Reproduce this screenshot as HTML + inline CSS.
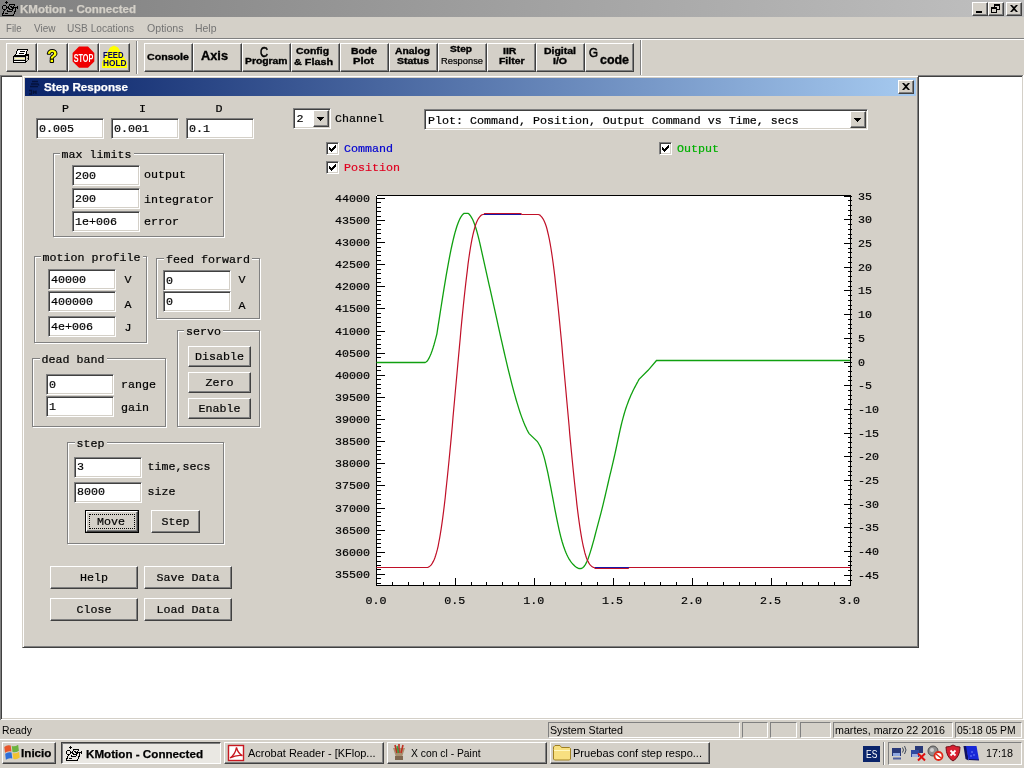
<!DOCTYPE html>
<html><head><meta charset="utf-8"><title>KMotion - Connected</title>
<style>
*{box-sizing:border-box;margin:0;padding:0}
html,body{width:1024px;height:768px;overflow:hidden;background:#d4d0c8}
body{position:relative;font-family:"Liberation Sans",sans-serif;font-size:11px;color:#000}
#root{position:absolute;left:0;top:0;width:1024px;height:768px;overflow:hidden;will-change:transform}
.a{position:absolute}
.t{position:absolute;white-space:pre;line-height:1}
.m{font-family:"Liberation Mono",monospace;font-size:11.667px;-webkit-text-stroke:0.2px currentColor}
.btn{position:absolute;background:#d4d0c8;border:1px solid;border-color:#fff #404040 #404040 #fff;box-shadow:inset -1px -1px 0 #808080, inset 1px 1px 0 #d4d0c8}
.tb{position:absolute;background:#d4d0c8;border:1px solid;border-color:#fff #404040 #404040 #fff;box-shadow:inset -1px -1px 0 #808080;}
.ed{position:absolute;background:#fff;border:1px solid;border-color:#808080 #fff #fff #808080;box-shadow:inset 1px 1px 0 #404040, inset -1px -1px 0 #d4d0c8}
.gb{position:absolute;border:1px solid;border-color:#808080 #fff #fff #808080;box-shadow:inset 1px 1px 0 #fff, 1px 1px 0 #fff}
.gb2{position:absolute;border:1px solid #808080;box-shadow:inset 1px 1px 0 #fff, 1px 1px 0 #fff}
.lg{position:absolute;background:#d4d0c8;white-space:pre;line-height:1;padding:0 2px}
.sunk{position:absolute;border:1px solid;border-color:#808080 #fff #fff #808080}
.cb{position:absolute;width:13px;height:13px;background:#fff;border:1px solid;border-color:#808080 #fff #fff #808080;box-shadow:inset 1px 1px 0 #404040, inset -1px -1px 0 #d4d0c8}
</style></head>
<body>
<div id="root">
<div class="a" style="left:0px;top:0px;width:1024px;height:17px;background:linear-gradient(90deg,#808080,#c0c0c0);"></div>
<div class="t" style="left:20.00px;top:3.69px;font-size:11px;font-weight:bold;color:#d4d0c8;transform:scaleX(1.0488);transform-origin:0 0;-webkit-text-stroke:0.25px currentColor;">KMotion - Connected</div>
<div class="btn" style="left:972px;top:2px;width:16px;height:14px">
<div class="a" style="left:3px;top:8px;width:6px;height:2px;background:#000"></div>
</div>
<div class="btn" style="left:988px;top:2px;width:16px;height:14px">
<div class="a" style="left:5px;top:1px;width:6px;height:6px;border:1px solid #000;border-top-width:2px"></div>
<div class="a" style="left:2px;top:4px;width:6px;height:6px;border:1px solid #000;border-top-width:2px;background:#d4d0c8"></div>
</div>
<div class="btn" style="left:1006px;top:2px;width:16px;height:14px">
<svg class="a" style="left:3px;top:2px" width="8" height="7" viewBox="0 0 8 7"><path d="M0 0h2l2 2 2-2h2l-3 3.5 3 3.5h-2l-2-2-2 2h-2l3-3.5z" fill="#000"/></svg>
</div>
<div class="t" style="left:6.00px;top:22.69px;font-size:11px;color:#747474;transform:scaleX(0.8744);transform-origin:0 0;">File</div>
<div class="t" style="left:34.00px;top:22.69px;font-size:11px;color:#747474;transform:scaleX(0.9093);transform-origin:0 0;">View</div>
<div class="t" style="left:67.00px;top:22.69px;font-size:11px;color:#747474;transform:scaleX(0.9208);transform-origin:0 0;">USB Locations</div>
<div class="t" style="left:147.00px;top:22.69px;font-size:11px;color:#747474;transform:scaleX(0.9628);transform-origin:0 0;">Options</div>
<div class="t" style="left:195.00px;top:22.69px;font-size:11px;color:#747474;transform:scaleX(0.9503);transform-origin:0 0;">Help</div>
<div class="a" style="left:0px;top:38px;width:1024px;height:1px;background:#808080;"></div>
<div class="a" style="left:0px;top:39px;width:1024px;height:1px;background:#ffffff;"></div>
<div class="tb" style="left:6px;top:43px;width:31px;height:29px"></div>
<div class="tb" style="left:37px;top:43px;width:31px;height:29px"></div>
<div class="tb" style="left:68px;top:43px;width:31px;height:29px"></div>
<div class="tb" style="left:99px;top:43px;width:31px;height:29px"></div>
<div class="a" style="left:136px;top:41px;width:1px;height:33px;background:#808080;"></div>
<div class="a" style="left:137px;top:41px;width:1px;height:33px;background:#ffffff;"></div>
<div class="tb" style="left:144px;top:43px;width:49px;height:29px"></div>
<div class="tb" style="left:193px;top:43px;width:49px;height:29px"></div>
<div class="tb" style="left:242px;top:43px;width:49px;height:29px"></div>
<div class="tb" style="left:291px;top:43px;width:49px;height:29px"></div>
<div class="tb" style="left:340px;top:43px;width:49px;height:29px"></div>
<div class="tb" style="left:389px;top:43px;width:49px;height:29px"></div>
<div class="tb" style="left:438px;top:43px;width:49px;height:29px"></div>
<div class="tb" style="left:487px;top:43px;width:49px;height:29px"></div>
<div class="tb" style="left:536px;top:43px;width:49px;height:29px"></div>
<div class="tb" style="left:585px;top:43px;width:49px;height:29px"></div>
<div class="t" style="left:147.00px;top:51.87px;font-size:9.6px;font-weight:bold;color:#000;transform:scaleX(1.1090);transform-origin:0 0;-webkit-text-stroke:0.35px #000;">Console</div>
<div class="t" style="left:201.00px;top:50.16px;font-size:12.8px;font-weight:bold;color:#000;transform:scaleX(0.9986);transform-origin:0 0;-webkit-text-stroke:0.35px #000;">Axis</div>
<div class="t" style="left:260.40px;top:45.41px;font-size:14.4px;color:#000;transform:scaleX(0.7693);transform-origin:0 0;-webkit-text-stroke:0.6px #000;">C</div>
<div class="t" style="left:244.75px;top:57.13px;font-size:9.3px;font-weight:bold;color:#000;transform:scaleX(1.1113);transform-origin:0 0;-webkit-text-stroke:0.35px #000;">Program</div>
<div class="t" style="left:296.00px;top:47.38px;font-size:9px;font-weight:bold;color:#000;transform:scaleX(1.1583);transform-origin:0 0;-webkit-text-stroke:0.35px #000;">Config</div>
<div class="t" style="left:294.00px;top:58.13px;font-size:9.3px;font-weight:bold;color:#000;transform:scaleX(1.1610);transform-origin:0 0;-webkit-text-stroke:0.35px #000;">&amp; Flash</div>
<div class="t" style="left:350.75px;top:46.78px;font-size:9px;font-weight:bold;color:#000;transform:scaleX(1.1555);transform-origin:0 0;-webkit-text-stroke:0.35px #000;">Bode</div>
<div class="t" style="left:353.00px;top:56.78px;font-size:9px;font-weight:bold;color:#000;transform:scaleX(1.2354);transform-origin:0 0;-webkit-text-stroke:0.35px #000;">Plot</div>
<div class="t" style="left:395.00px;top:46.78px;font-size:9px;font-weight:bold;color:#000;transform:scaleX(1.1476);transform-origin:0 0;-webkit-text-stroke:0.35px #000;">Analog</div>
<div class="t" style="left:397.00px;top:56.78px;font-size:9px;font-weight:bold;color:#000;transform:scaleX(1.1633);transform-origin:0 0;-webkit-text-stroke:0.35px #000;">Status</div>
<div class="t" style="left:449.75px;top:45.38px;font-size:9px;font-weight:bold;color:#000;transform:scaleX(1.1280);transform-origin:0 0;-webkit-text-stroke:0.35px #000;">Step</div>
<div class="t" style="left:440.75px;top:56.73px;font-size:9.3px;color:#000;transform:scaleX(1.0029);transform-origin:0 0;-webkit-text-stroke:0.2px #000;">Response</div>
<div class="t" style="left:502.60px;top:46.78px;font-size:9px;font-weight:bold;color:#000;transform:scaleX(1.1652);transform-origin:0 0;-webkit-text-stroke:0.35px #000;">IIR</div>
<div class="t" style="left:499.00px;top:56.78px;font-size:9px;font-weight:bold;color:#000;transform:scaleX(1.1589);transform-origin:0 0;-webkit-text-stroke:0.35px #000;">Filter</div>
<div class="t" style="left:544.00px;top:46.78px;font-size:9px;font-weight:bold;color:#000;transform:scaleX(1.1636);transform-origin:0 0;-webkit-text-stroke:0.35px #000;">Digital</div>
<div class="t" style="left:553.00px;top:56.78px;font-size:9px;font-weight:bold;color:#000;transform:scaleX(1.1666);transform-origin:0 0;-webkit-text-stroke:0.35px #000;">I/O</div>
<div class="t" style="left:588.70px;top:45.60px;font-size:13px;color:#000;transform:scaleX(0.8901);transform-origin:0 0;-webkit-text-stroke:0.6px #000;">G</div>
<div class="t" style="left:600.00px;top:53.83px;font-size:12.6px;font-weight:bold;color:#000;transform:scaleX(0.9861);transform-origin:0 0;-webkit-text-stroke:0.35px #000;">code</div>
<svg class="a" style="left:0;top:39px" width="140" height="36" viewBox="0 39 140 36">
<g shape-rendering="crispEdges">
<polygon points="13.5,56.5 16,54.5 28.5,54.5 28.5,59.5 25.5,62.5 13.5,62.5" fill="#d4d0c8" stroke="#000"/>
<path d="M13.5 56.5H25.5L28.5 54.5M25.5 56.5V62.5" fill="none" stroke="#000"/>
<polygon points="17.5,49.5 27.5,49.5 25.500,55.5 15.5,55.5" fill="#fff" stroke="#000"/>
<path d="M19.500 51.5h5.500M18.500 53.5h5.500" stroke="#000" fill="none"/>
<path d="M15 58.5h10" stroke="#ffffb0" fill="none"/>
<path d="M14 60.5h11" stroke="#000" fill="none"/>
<path d="M14 61.5h11" stroke="#fff" fill="none"/>
<path d="M26.500 58.5h1M26.500 60.5h1" stroke="#606060" fill="none"/>
</g>
<text x="52.3" y="62" text-anchor="middle" font-family="Liberation Sans, sans-serif" font-weight="bold" font-size="17" fill="#ffff00" stroke="#000" stroke-width="2" paint-order="stroke" stroke-linejoin="round">?</text>
<polygon points="79,46.6 88,46.6 94.3,53 94.3,61.4 88,67.7 79,67.7 72.6,61.4 72.6,53" fill="#f00000"/>
<text x="83.5" y="61.9" text-anchor="middle" font-family="Liberation Sans, sans-serif" font-weight="bold" font-size="10.5" fill="#fff" textLength="19.5" lengthAdjust="spacingAndGlyphs">STOP</text>
<polygon points="114,45.6 118,47.5 127,62 127,68 102,68 102,62 110,47.5" fill="#ffff00"/>
<text x="103" y="57.7" font-family="Liberation Sans, sans-serif" font-weight="bold" font-size="9" fill="#000060" textLength="20.5" lengthAdjust="spacingAndGlyphs">FEED</text>
<text x="103" y="65.7" font-family="Liberation Sans, sans-serif" font-weight="bold" font-size="9" fill="#000060" textLength="23.5" lengthAdjust="spacingAndGlyphs">HOLD</text>
</svg>
<svg class="a" style="left:0px;top:0px" width="19" height="17" viewBox="0 0 19 17" shape-rendering="crispEdges"><path d="M6 1h1v1h-1zM5 2h3v1h-3zM6 3h1v1h-1zM9 4h6v1h-6zM3 5h3v1h-3zM9 5h1v1h-1zM14 5h1v1h-1zM2 6h1v1h-1zM6 6h1v1h-1zM8 6h1v1h-1zM10 6h2v1h-2zM13 6h1v1h-1zM17 6h1v1h-1zM2 7h1v1h-1zM6 7h3v1h-3zM11 7h2v1h-2zM13 7h5v1h-5zM2 8h1v1h-1zM6 8h1v1h-1zM8 8h2v1h-2zM12 8h2v1h-2zM15 8h1v1h-1zM17 8h1v1h-1zM3 9h3v1h-3zM9 9h3v1h-3zM12 9h1v1h-1zM15 9h1v1h-1zM4 10h1v1h-1zM7 10h1v1h-1zM12 10h1v1h-1zM15 10h1v1h-1zM3 11h1v1h-1zM7 11h5v1h-5zM14 11h2v1h-2zM3 12h1v1h-1zM14 12h1v1h-1zM2 13h2v1h-2zM5 13h3v1h-3zM14 13h1v1h-1zM2 14h1v1h-1zM13 14h1v1h-1zM2 15h12v1h-12z" fill="#000"/></svg>
<div class="a" style="left:640px;top:40px;width:1px;height:35px;background:#808080;"></div>
<div class="a" style="left:641px;top:40px;width:1px;height:35px;background:#ffffff;"></div>
<div class="a" style="left:0px;top:75px;width:1024px;height:1px;background:#808080;"></div>
<div class="a" style="left:0px;top:76px;width:1024px;height:1px;background:#404040;"></div>
<div class="a" style="left:0px;top:75px;width:1px;height:645px;background:#808080;"></div>
<div class="a" style="left:1px;top:76px;width:1px;height:644px;background:#404040;"></div>
<div class="a" style="left:2px;top:77px;width:1020px;height:641px;background:#fff;"></div>
<div class="a" style="left:1022px;top:76px;width:1px;height:644px;background:#d4d0c8;"></div>
<div class="a" style="left:1023px;top:75px;width:1px;height:645px;background:#ffffff;"></div>
<div class="a" style="left:2px;top:718px;width:1020px;height:1px;background:#d4d0c8;"></div>
<div class="a" style="left:1px;top:719px;width:1023px;height:1px;background:#ffffff;"></div>
<div class="a" id="child" style="left:22px;top:75px;width:897px;height:573px;background:#d4d0c8;border:1px solid;border-color:#d4d0c8 #404040 #404040 #d4d0c8;box-shadow:inset 1px 1px 0 #fff, inset -1px -1px 0 #808080"></div>
<div class="a" style="left:25px;top:78px;width:891px;height:18px;background:linear-gradient(90deg,#0a246a,#a6caf0);"></div>
<div class="t" style="left:44.00px;top:81.69px;font-size:11px;font-weight:bold;color:#fff;transform:scaleX(1.0570);transform-origin:0 0;-webkit-text-stroke:0.25px currentColor;">Step Response</div>
<div class="btn" style="left:898px;top:80px;width:16px;height:14px">
<svg class="a" style="left:3px;top:2px" width="8" height="7" viewBox="0 0 8 7"><path d="M0 0h2l2 2 2-2h2l-3 3.5 3 3.5h-2l-2-2-2 2h-2l3-3.5z" fill="#000"/></svg>
</div>
<svg class="a" style="left:27px;top:79px" width="16" height="16" viewBox="0 0 16 16"><g fill="none" stroke="#04123c" stroke-width="1.3">
<path d="M5 2.500h6M4 5h7l1 1.500M3 7.500h8"/>
<path d="M2 11.500h2.500v3.500h-2.500M6.500 11.500v3.500M6.500 13h2.500v-1.500M9 13v2"/>
</g></svg>
<div class="t m" style="left:62px;top:104px;color:#000">P</div>
<div class="t m" style="left:139px;top:104px;color:#000">I</div>
<div class="t m" style="left:215.5px;top:104px;color:#000">D</div>
<div class="ed" style="left:36px;top:118px;width:68px;height:21px"></div>
<div class="t m" style="left:39px;top:124px;color:#000">0.005</div>
<div class="ed" style="left:111px;top:118px;width:68px;height:21px"></div>
<div class="t m" style="left:114px;top:124px;color:#000">0.001</div>
<div class="ed" style="left:186px;top:118px;width:68px;height:21px"></div>
<div class="t m" style="left:189px;top:124px;color:#000">0.1</div>
<div class="gb2" style="left:53px;top:153px;width:171px;height:84px"></div>
<div class="a" style="left:59.5px;top:153px;width:74px;height:2px;background:#d4d0c8;"></div>
<div class="t m" style="left:61.5px;top:150px;color:#000">max limits</div>
<div class="ed" style="left:72px;top:165px;width:68px;height:21px"></div>
<div class="t m" style="left:75px;top:171px;color:#000">200</div>
<div class="t m" style="left:144px;top:170px;color:#000">output</div>
<div class="ed" style="left:72px;top:188px;width:68px;height:21px"></div>
<div class="t m" style="left:75px;top:194px;color:#000">200</div>
<div class="t m" style="left:144px;top:195px;color:#000">integrator</div>
<div class="ed" style="left:72px;top:211px;width:68px;height:21px"></div>
<div class="t m" style="left:75px;top:217px;color:#000">1e+006</div>
<div class="t m" style="left:144px;top:217px;color:#000">error</div>
<div class="gb2" style="left:34px;top:256px;width:113px;height:87px"></div>
<div class="a" style="left:40.5px;top:256px;width:102px;height:2px;background:#d4d0c8;"></div>
<div class="t m" style="left:42.5px;top:253px;color:#000">motion profile</div>
<div class="ed" style="left:48px;top:269px;width:68px;height:21px"></div>
<div class="t m" style="left:51px;top:275px;color:#000">40000</div>
<div class="t m" style="left:124.5px;top:275px;color:#000">V</div>
<div class="ed" style="left:48px;top:291px;width:68px;height:21px"></div>
<div class="t m" style="left:51px;top:297px;color:#000">400000</div>
<div class="t m" style="left:124.5px;top:300px;color:#000">A</div>
<div class="ed" style="left:48px;top:316px;width:68px;height:21px"></div>
<div class="t m" style="left:51px;top:322px;color:#000">4e+006</div>
<div class="t m" style="left:124.5px;top:323px;color:#000">J</div>
<div class="gb2" style="left:156px;top:258px;width:104px;height:61px"></div>
<div class="a" style="left:164px;top:258px;width:88px;height:2px;background:#d4d0c8;"></div>
<div class="t m" style="left:166px;top:255px;color:#000">feed forward</div>
<div class="ed" style="left:163px;top:270px;width:68px;height:21px"></div>
<div class="t m" style="left:166px;top:276px;color:#000">0</div>
<div class="t m" style="left:238.5px;top:275px;color:#000">V</div>
<div class="ed" style="left:163px;top:291px;width:68px;height:21px"></div>
<div class="t m" style="left:166px;top:297px;color:#000">0</div>
<div class="t m" style="left:238.5px;top:301px;color:#000">A</div>
<div class="gb2" style="left:177px;top:330px;width:83px;height:97px"></div>
<div class="a" style="left:184px;top:330px;width:39px;height:2px;background:#d4d0c8;"></div>
<div class="t m" style="left:186px;top:327px;color:#000">servo</div>
<div class="btn" style="left:188px;top:346px;width:63px;height:21px"></div>
<div class="t m" style="left:195.0px;top:352px;color:#000">Disable</div>
<div class="btn" style="left:188px;top:372px;width:63px;height:21px"></div>
<div class="t m" style="left:205.5px;top:378px;color:#000">Zero</div>
<div class="btn" style="left:188px;top:398px;width:63px;height:21px"></div>
<div class="t m" style="left:198.5px;top:404px;color:#000">Enable</div>
<div class="gb2" style="left:32px;top:358px;width:134px;height:69px"></div>
<div class="a" style="left:39.5px;top:358px;width:67px;height:2px;background:#d4d0c8;"></div>
<div class="t m" style="left:41.5px;top:355px;color:#000">dead band</div>
<div class="ed" style="left:46px;top:374px;width:68px;height:21px"></div>
<div class="t m" style="left:49px;top:380px;color:#000">0</div>
<div class="t m" style="left:121px;top:380px;color:#000">range</div>
<div class="ed" style="left:46px;top:396px;width:68px;height:21px"></div>
<div class="t m" style="left:49px;top:402px;color:#000">1</div>
<div class="t m" style="left:121px;top:403px;color:#000">gain</div>
<div class="gb2" style="left:67px;top:442px;width:157px;height:102px"></div>
<div class="a" style="left:74.5px;top:442px;width:32px;height:2px;background:#d4d0c8;"></div>
<div class="t m" style="left:76.5px;top:439px;color:#000">step</div>
<div class="ed" style="left:74px;top:457px;width:68px;height:21px"></div>
<div class="t m" style="left:77px;top:462px;color:#000">3</div>
<div class="t m" style="left:147.5px;top:462px;color:#000">time,secs</div>
<div class="ed" style="left:74px;top:482px;width:68px;height:21px"></div>
<div class="t m" style="left:77px;top:487px;color:#000">8000</div>
<div class="t m" style="left:147.5px;top:487px;color:#000">size</div>
<div class="a" style="left:85px;top:510px;width:54px;height:23px;border:1px solid #000"></div>
<div class="btn" style="left:86px;top:511px;width:52px;height:21px"></div>
<div class="a" style="left:89px;top:514px;width:46px;height:15px;border:1px dotted #000"></div>
<div class="t m" style="left:97.0px;top:517px;color:#000">Move</div>
<div class="btn" style="left:151px;top:510px;width:49px;height:23px"></div>
<div class="t m" style="left:161.5px;top:517px;color:#000">Step</div>
<div class="btn" style="left:50px;top:566px;width:88px;height:23px"></div>
<div class="t m" style="left:80.0px;top:573px;color:#000">Help</div>
<div class="btn" style="left:144px;top:566px;width:88px;height:23px"></div>
<div class="t m" style="left:156.5px;top:573px;color:#000">Save Data</div>
<div class="btn" style="left:50px;top:598px;width:88px;height:23px"></div>
<div class="t m" style="left:76.5px;top:605px;color:#000">Close</div>
<div class="btn" style="left:144px;top:598px;width:88px;height:23px"></div>
<div class="t m" style="left:156.5px;top:605px;color:#000">Load Data</div>
<div class="ed" style="left:293px;top:108px;width:38px;height:21px"><div class="btn" style="right:1px;top:1px;width:16px;height:17px"><svg class="a" style="left:3px;top:6px" width="7" height="4" viewBox="0 0 7 4" shape-rendering="crispEdges"><path d="M0 0h7l-3.500 4z" fill="#000"/></svg></div></div>
<div class="t m" style="left:296.5px;top:114px;color:#000">2</div>
<div class="t m" style="left:335px;top:114px;color:#000">Channel</div>
<div class="ed" style="left:424px;top:109px;width:444px;height:21px"><div class="btn" style="right:1px;top:1px;width:16px;height:17px"><svg class="a" style="left:3px;top:6px" width="7" height="4" viewBox="0 0 7 4" shape-rendering="crispEdges"><path d="M0 0h7l-3.500 4z" fill="#000"/></svg></div></div>
<div class="t m" style="left:428px;top:116px;color:#000">Plot: Command, Position, Output Command vs Time, secs</div>
<div class="cb" style="left:326px;top:142px"><svg class="a" style="left:2px;top:2px" width="7" height="7" viewBox="0 0 7 7" shape-rendering="crispEdges"><path d="M0 2v3l2 2 5-5v-3l-5 5z" fill="#000"/></svg></div>
<div class="t m" style="left:344px;top:144px;color:#0000d0">Command</div>
<div class="cb" style="left:326px;top:161px"><svg class="a" style="left:2px;top:2px" width="7" height="7" viewBox="0 0 7 7" shape-rendering="crispEdges"><path d="M0 2v3l2 2 5-5v-3l-5 5z" fill="#000"/></svg></div>
<div class="t m" style="left:344px;top:163px;color:#e00020">Position</div>
<div class="cb" style="left:659px;top:142px"><svg class="a" style="left:2px;top:2px" width="7" height="7" viewBox="0 0 7 7" shape-rendering="crispEdges"><path d="M0 2v3l2 2 5-5v-3l-5 5z" fill="#000"/></svg></div>
<div class="t m" style="left:677px;top:144px;color:#00b000">Output</div>
<svg class="a" style="left:0;top:0" width="1024" height="768" viewBox="0 0 1024 768" shape-rendering="crispEdges">
<rect x="376" y="195" width="475" height="391" fill="#fff"/>
<path d="M376.5 195.5V585.5H850.5V195.5H376.5" fill="none" stroke="#000" stroke-width="1"/>
<path d="M376 583.5h5M376 578.5h5M376 574.5h9M376 569.5h5M376 565.5h5M376 561.5h5M376 556.5h5M376 552.5h9M376 547.5h5M376 543.5h5M376 539.5h5M376 534.5h5M376 530.5h9M376 525.5h5M376 521.5h5M376 516.5h5M376 512.5h5M376 508.5h9M376 503.5h5M376 499.5h5M376 494.5h5M376 490.5h5M376 485.5h9M376 481.5h5M376 477.5h5M376 472.5h5M376 468.5h5M376 463.5h9M376 459.5h5M376 454.5h5M376 450.5h5M376 446.5h5M376 441.5h9M376 437.5h5M376 432.5h5M376 428.5h5M376 424.5h5M376 419.5h9M376 415.5h5M376 410.5h5M376 406.5h5M376 401.5h5M376 397.5h9M376 393.5h5M376 388.5h5M376 384.5h5M376 379.5h5M376 375.5h9M376 370.5h5M376 366.5h5M376 362.5h5M376 357.5h5M376 353.5h9M376 348.5h5M376 344.5h5M376 339.5h5M376 335.5h5M376 331.5h9M376 326.5h5M376 322.5h5M376 317.5h5M376 313.5h5M376 308.5h9M376 304.5h5M376 300.5h5M376 295.5h5M376 291.5h5M376 286.5h9M376 282.5h5M376 278.5h5M376 273.5h5M376 269.5h5M376 264.5h9M376 260.5h5M376 255.5h5M376 251.5h5M376 247.5h5M376 242.5h9M376 238.5h5M376 233.5h5M376 229.5h5M376 224.5h5M376 220.5h9M376 216.5h5M376 211.5h5M376 207.5h5M376 202.5h5M376 198.5h9" stroke="#000" stroke-width="1" fill="none"/>
<path d="M852 580.5h-4M852 575.5h-8M852 570.5h-4M852 565.5h-4M852 561.5h-4M852 556.5h-4M852 551.5h-8M852 546.5h-4M852 542.5h-4M852 537.5h-4M852 532.5h-4M852 527.5h-8M852 523.5h-4M852 518.5h-4M852 513.5h-4M852 508.5h-4M852 504.5h-8M852 499.5h-4M852 494.5h-4M852 489.5h-4M852 485.5h-4M852 480.5h-8M852 475.5h-4M852 471.5h-4M852 466.5h-4M852 461.5h-4M852 456.5h-8M852 452.5h-4M852 447.5h-4M852 442.5h-4M852 437.5h-4M852 433.5h-8M852 428.5h-4M852 423.5h-4M852 418.5h-4M852 414.5h-4M852 409.5h-8M852 404.5h-4M852 399.5h-4M852 395.5h-4M852 390.5h-4M852 385.5h-8M852 380.5h-4M852 376.5h-4M852 371.5h-4M852 366.5h-4M852 362.5h-8M852 357.5h-4M852 352.5h-4M852 347.5h-4M852 343.5h-4M852 338.5h-8M852 333.5h-4M852 328.5h-4M852 324.5h-4M852 319.5h-4M852 314.5h-8M852 309.5h-4M852 305.5h-4M852 300.5h-4M852 295.5h-4M852 290.5h-8M852 286.5h-4M852 281.5h-4M852 276.5h-4M852 271.5h-4M852 267.5h-8M852 262.5h-4M852 257.5h-4M852 252.5h-4M852 248.5h-4M852 243.5h-8M852 238.5h-4M852 234.5h-4M852 229.5h-4M852 224.5h-4M852 219.5h-8M852 215.5h-4M852 210.5h-4M852 205.5h-4M852 200.5h-4M852 196.5h-8" stroke="#000" stroke-width="1" fill="none"/>
<path d="M376.5 586v-8M392.5 586v-4M408.5 586v-4M423.5 586v-4M439.5 586v-4M455.5 586v-8M471.5 586v-4M486.5 586v-4M502.5 586v-4M518.5 586v-4M534.5 586v-8M550.5 586v-4M565.5 586v-4M581.5 586v-4M597.5 586v-4M613.5 586v-8M629.5 586v-4M644.5 586v-4M660.5 586v-4M676.5 586v-4M692.5 586v-8M707.5 586v-4M723.5 586v-4M739.5 586v-4M755.5 586v-4M771.5 586v-8M786.5 586v-4M802.5 586v-4M818.5 586v-4M834.5 586v-4M850.5 586v-8" stroke="#000" stroke-width="1" fill="none"/>
<text x="370" y="578" text-anchor="end" font-family="Liberation Mono, monospace" font-size="11.667" stroke="#000" stroke-width="0.2">35500</text>
<text x="370" y="556" text-anchor="end" font-family="Liberation Mono, monospace" font-size="11.667" stroke="#000" stroke-width="0.2">36000</text>
<text x="370" y="534" text-anchor="end" font-family="Liberation Mono, monospace" font-size="11.667" stroke="#000" stroke-width="0.2">36500</text>
<text x="370" y="512" text-anchor="end" font-family="Liberation Mono, monospace" font-size="11.667" stroke="#000" stroke-width="0.2">37000</text>
<text x="370" y="489" text-anchor="end" font-family="Liberation Mono, monospace" font-size="11.667" stroke="#000" stroke-width="0.2">37500</text>
<text x="370" y="467" text-anchor="end" font-family="Liberation Mono, monospace" font-size="11.667" stroke="#000" stroke-width="0.2">38000</text>
<text x="370" y="445" text-anchor="end" font-family="Liberation Mono, monospace" font-size="11.667" stroke="#000" stroke-width="0.2">38500</text>
<text x="370" y="423" text-anchor="end" font-family="Liberation Mono, monospace" font-size="11.667" stroke="#000" stroke-width="0.2">39000</text>
<text x="370" y="401" text-anchor="end" font-family="Liberation Mono, monospace" font-size="11.667" stroke="#000" stroke-width="0.2">39500</text>
<text x="370" y="379" text-anchor="end" font-family="Liberation Mono, monospace" font-size="11.667" stroke="#000" stroke-width="0.2">40000</text>
<text x="370" y="357" text-anchor="end" font-family="Liberation Mono, monospace" font-size="11.667" stroke="#000" stroke-width="0.2">40500</text>
<text x="370" y="335" text-anchor="end" font-family="Liberation Mono, monospace" font-size="11.667" stroke="#000" stroke-width="0.2">41000</text>
<text x="370" y="312" text-anchor="end" font-family="Liberation Mono, monospace" font-size="11.667" stroke="#000" stroke-width="0.2">41500</text>
<text x="370" y="290" text-anchor="end" font-family="Liberation Mono, monospace" font-size="11.667" stroke="#000" stroke-width="0.2">42000</text>
<text x="370" y="268" text-anchor="end" font-family="Liberation Mono, monospace" font-size="11.667" stroke="#000" stroke-width="0.2">42500</text>
<text x="370" y="246" text-anchor="end" font-family="Liberation Mono, monospace" font-size="11.667" stroke="#000" stroke-width="0.2">43000</text>
<text x="370" y="224" text-anchor="end" font-family="Liberation Mono, monospace" font-size="11.667" stroke="#000" stroke-width="0.2">43500</text>
<text x="370" y="202" text-anchor="end" font-family="Liberation Mono, monospace" font-size="11.667" stroke="#000" stroke-width="0.2">44000</text>
<text x="858" y="579" font-family="Liberation Mono, monospace" font-size="11.667" stroke="#000" stroke-width="0.2">-45</text>
<text x="858" y="555" font-family="Liberation Mono, monospace" font-size="11.667" stroke="#000" stroke-width="0.2">-40</text>
<text x="858" y="531" font-family="Liberation Mono, monospace" font-size="11.667" stroke="#000" stroke-width="0.2">-35</text>
<text x="858" y="508" font-family="Liberation Mono, monospace" font-size="11.667" stroke="#000" stroke-width="0.2">-30</text>
<text x="858" y="484" font-family="Liberation Mono, monospace" font-size="11.667" stroke="#000" stroke-width="0.2">-25</text>
<text x="858" y="460" font-family="Liberation Mono, monospace" font-size="11.667" stroke="#000" stroke-width="0.2">-20</text>
<text x="858" y="437" font-family="Liberation Mono, monospace" font-size="11.667" stroke="#000" stroke-width="0.2">-15</text>
<text x="858" y="413" font-family="Liberation Mono, monospace" font-size="11.667" stroke="#000" stroke-width="0.2">-10</text>
<text x="858" y="389" font-family="Liberation Mono, monospace" font-size="11.667" stroke="#000" stroke-width="0.2">-5</text>
<text x="858" y="366" font-family="Liberation Mono, monospace" font-size="11.667" stroke="#000" stroke-width="0.2">0</text>
<text x="858" y="342" font-family="Liberation Mono, monospace" font-size="11.667" stroke="#000" stroke-width="0.2">5</text>
<text x="858" y="318" font-family="Liberation Mono, monospace" font-size="11.667" stroke="#000" stroke-width="0.2">10</text>
<text x="858" y="294" font-family="Liberation Mono, monospace" font-size="11.667" stroke="#000" stroke-width="0.2">15</text>
<text x="858" y="271" font-family="Liberation Mono, monospace" font-size="11.667" stroke="#000" stroke-width="0.2">20</text>
<text x="858" y="247" font-family="Liberation Mono, monospace" font-size="11.667" stroke="#000" stroke-width="0.2">25</text>
<text x="858" y="223" font-family="Liberation Mono, monospace" font-size="11.667" stroke="#000" stroke-width="0.2">30</text>
<text x="858" y="200" font-family="Liberation Mono, monospace" font-size="11.667" stroke="#000" stroke-width="0.2">35</text>
<text x="375.9" y="604" text-anchor="middle" font-family="Liberation Mono, monospace" font-size="11.667" stroke="#000" stroke-width="0.2">0.0</text>
<text x="454.8" y="604" text-anchor="middle" font-family="Liberation Mono, monospace" font-size="11.667" stroke="#000" stroke-width="0.2">0.5</text>
<text x="533.7" y="604" text-anchor="middle" font-family="Liberation Mono, monospace" font-size="11.667" stroke="#000" stroke-width="0.2">1.0</text>
<text x="612.6" y="604" text-anchor="middle" font-family="Liberation Mono, monospace" font-size="11.667" stroke="#000" stroke-width="0.2">1.5</text>
<text x="691.6" y="604" text-anchor="middle" font-family="Liberation Mono, monospace" font-size="11.667" stroke="#000" stroke-width="0.2">2.0</text>
<text x="770.5" y="604" text-anchor="middle" font-family="Liberation Mono, monospace" font-size="11.667" stroke="#000" stroke-width="0.2">2.5</text>
<text x="849.4" y="604" text-anchor="middle" font-family="Liberation Mono, monospace" font-size="11.667" stroke="#000" stroke-width="0.2">3.0</text>
<path d="M376.5 362.5 L425.0 362.5 L426.0 362.0 L427.0 361.2 L428.0 359.9 L429.0 358.2 L430.0 356.1 L431.0 353.7 L432.0 351.0 L433.0 348.0 L434.0 344.7 L435.0 341.1 L436.0 337.3 L436.9 333.8 L437.0 333.1 L438.0 326.7 L439.0 320.3 L440.0 313.8 L441.0 307.5 L442.0 301.1 L443.0 294.9 L444.0 288.7 L445.0 282.6 L446.0 276.7 L447.0 270.9 L448.0 265.3 L449.0 259.9 L450.0 254.7 L451.0 249.7 L452.0 245.0 L453.0 240.6 L454.0 236.5 L455.0 232.7 L456.0 229.2 L457.0 226.0 L458.0 223.2 L459.0 220.8 L460.0 218.6 L461.0 216.8 L462.0 215.4 L463.0 214.2 L464.0 213.4 L465.0 213.3 L466.0 213.3 L467.0 213.3 L468.0 213.3 L469.0 214.1 L470.0 215.2 L471.0 216.6 L472.0 218.3 L473.0 220.3 L474.0 222.7 L475.0 225.4 L476.0 228.5 L477.0 231.9 L478.0 235.6 L479.0 239.7 L480.0 243.9 L481.0 248.4 L482.0 252.9 L483.0 257.4 L484.0 261.9 L485.0 266.4 L486.0 270.9 L487.0 275.3 L488.0 279.8 L489.0 284.3 L490.0 288.7 L491.0 293.2 L492.0 297.7 L493.0 302.2 L494.0 306.7 L495.0 311.2 L496.0 315.7 L497.0 320.2 L498.0 324.8 L499.0 329.3 L500.0 333.8 L501.0 338.3 L502.0 342.7 L503.0 347.1 L504.0 351.5 L505.0 355.8 L506.0 360.1 L507.0 364.4 L508.0 368.6 L509.0 372.7 L510.0 376.7 L511.0 380.7 L512.0 384.6 L513.0 388.4 L514.0 392.1 L515.0 395.7 L516.0 399.2 L517.0 402.6 L518.0 405.9 L519.0 409.1 L520.0 412.2 L521.0 415.1 L522.0 417.9 L523.0 420.6 L524.0 423.1 L525.0 425.4 L526.0 427.6 L527.0 429.7 L528.0 431.6 L529.0 433.3 L529.4 433.9 L537.2 441.3 L538.0 442.5 L539.0 444.2 L540.0 446.0 L541.0 448.1 L542.0 450.6 L543.0 453.6 L544.0 456.9 L545.0 460.7 L546.0 464.8 L547.0 469.1 L548.0 473.7 L549.0 478.6 L550.0 483.6 L551.0 488.7 L552.0 494.0 L553.0 499.2 L554.0 504.5 L555.0 509.8 L556.0 514.9 L557.0 519.9 L558.0 524.7 L559.0 529.3 L560.0 533.6 L561.0 537.6 L562.0 541.2 L563.0 544.5 L564.0 547.6 L565.0 550.3 L566.0 552.8 L567.0 555.0 L568.0 557.0 L569.0 558.8 L570.0 560.4 L571.0 561.8 L572.0 563.1 L573.0 564.2 L574.0 565.2 L575.0 566.2 L576.0 567.0 L577.0 567.7 L578.0 568.2 L579.0 568.5 L580.0 568.7 L581.0 568.5 L582.0 568.2 L583.0 567.5 L584.0 566.5 L585.0 565.1 L586.0 563.4 L587.0 561.3 L588.0 558.9 L589.0 556.1 L590.0 553.1 L591.0 549.9 L592.0 546.5 L593.0 542.9 L594.0 539.3 L595.0 535.5 L596.0 531.7 L597.0 527.9 L598.0 524.1 L599.0 520.4 L600.0 516.6 L601.0 512.8 L602.0 508.9 L603.0 504.9 L604.0 500.7 L605.0 496.5 L606.0 492.2 L607.0 487.8 L608.0 483.5 L609.0 479.2 L610.0 474.9 L611.0 470.8 L612.0 466.6 L613.0 462.3 L614.0 458.0 L615.0 453.6 L616.0 449.0 L617.0 444.3 L618.0 439.6 L619.0 435.0 L620.0 430.4 L621.0 426.0 L622.0 421.9 L623.0 418.1 L624.0 414.5 L625.0 411.1 L626.0 408.0 L627.0 405.1 L628.0 402.4 L629.0 399.8 L630.0 397.4 L631.0 395.1 L632.0 392.9 L633.0 390.8 L634.0 388.8 L635.0 386.9 L636.0 385.0 L637.0 383.1 L638.0 381.3 L639.0 379.4 L648.1 370.3 L656.5 360.5 L850.0 360.5" fill="none" stroke="#10a010" stroke-width="1.3" shape-rendering="auto"/>
<path d="M376.5 567.5 L377.3 567.5 L378.1 567.5 L378.9 567.5 L379.7 567.5 L380.4 567.5 L381.2 567.5 L382.0 567.5 L382.8 567.5 L383.6 567.5 L384.4 567.5 L385.2 567.5 L386.0 567.5 L386.8 567.5 L387.5 567.5 L388.3 567.5 L389.1 567.5 L389.9 567.5 L390.7 567.5 L391.5 567.5 L392.3 567.5 L393.1 567.5 L393.9 567.5 L394.7 567.5 L395.4 567.5 L396.2 567.5 L397.0 567.5 L397.8 567.5 L398.6 567.5 L399.4 567.5 L400.2 567.5 L401.0 567.5 L401.8 567.5 L402.5 567.5 L403.3 567.5 L404.1 567.5 L404.9 567.5 L405.7 567.5 L406.5 567.5 L407.3 567.5 L408.1 567.5 L408.9 567.5 L409.6 567.5 L410.4 567.5 L411.2 567.5 L412.0 567.5 L412.8 567.5 L413.6 567.5 L414.4 567.5 L415.2 567.5 L416.0 567.5 L416.7 567.5 L417.5 567.5 L418.3 567.5 L419.1 567.5 L419.9 567.5 L420.7 567.5 L421.5 567.5 L422.3 567.5 L423.1 567.5 L423.9 567.5 L424.6 567.5 L425.4 567.5 L426.2 567.5 L427.0 567.5 L427.8 567.5 L428.6 567.0 L429.4 566.5 L430.2 565.9 L431.0 565.1 L431.7 564.1 L432.5 562.9 L433.3 561.4 L434.1 559.7 L434.9 557.7 L435.7 555.3 L436.5 552.7 L437.3 549.7 L438.1 546.3 L438.8 542.5 L439.6 538.3 L440.4 533.6 L441.2 528.6 L442.0 523.1 L442.8 517.3 L443.6 511.1 L444.4 504.6 L445.2 497.7 L445.9 490.6 L446.7 483.2 L447.5 475.6 L448.3 467.8 L449.1 459.7 L449.9 451.5 L450.7 443.1 L451.5 434.6 L452.3 426.0 L453.0 417.3 L453.8 408.5 L454.6 399.7 L455.4 390.8 L456.2 382.0 L457.0 373.2 L457.8 364.4 L458.6 355.7 L459.4 347.1 L460.2 338.5 L460.9 330.2 L461.7 321.9 L462.5 313.9 L463.3 306.0 L464.1 298.4 L464.9 291.0 L465.7 283.9 L466.5 277.1 L467.3 270.6 L468.0 264.4 L468.8 258.5 L469.6 253.1 L470.4 248.0 L471.2 243.4 L472.0 239.2 L472.8 235.4 L473.6 232.0 L474.4 229.0 L475.1 226.3 L475.9 224.0 L476.7 222.0 L477.5 220.3 L478.3 218.8 L479.1 217.6 L479.9 216.6 L480.7 215.8 L481.5 215.1 L482.2 214.7 L483.0 214.5 L483.8 214.5 L484.6 213.5 L485.4 213.5 L486.2 213.5 L487.0 213.5 L487.8 213.5 L488.6 213.5 L489.4 213.5 L490.1 213.5 L490.9 213.5 L491.7 213.5 L492.5 213.5 L493.3 213.5 L494.1 213.5 L494.9 213.5 L495.7 213.5 L496.5 213.5 L497.2 213.5 L498.0 213.5 L498.8 213.5 L499.6 213.5 L500.4 213.5 L501.2 213.5 L502.0 213.5 L502.8 213.5 L503.6 213.5 L504.3 213.5 L505.1 213.5 L505.9 213.5 L506.7 213.5 L507.5 213.5 L508.3 213.5 L509.1 213.5 L509.9 213.5 L510.7 213.5 L511.4 213.5 L512.2 213.5 L513.0 213.5 L513.8 213.5 L514.6 213.5 L515.4 213.5 L516.2 213.5 L517.0 213.5 L517.8 213.5 L518.5 213.5 L519.3 213.5 L520.1 213.5 L520.9 213.5 L521.7 214.5 L522.5 214.5 L523.3 214.5 L524.1 214.5 L524.9 214.5 L525.7 214.5 L526.4 214.5 L527.2 214.5 L528.0 214.5 L528.8 214.5 L529.6 214.5 L530.4 214.5 L531.2 214.5 L532.0 214.5 L532.8 214.5 L533.5 214.5 L534.3 214.5 L535.1 214.5 L535.9 214.5 L536.7 214.5 L537.5 214.5 L538.3 214.5 L539.1 214.7 L539.9 215.1 L540.6 215.8 L541.4 216.6 L542.2 217.6 L543.0 218.8 L543.8 220.3 L544.6 222.0 L545.4 224.0 L546.2 226.3 L547.0 229.0 L547.7 232.0 L548.5 235.4 L549.3 239.2 L550.1 243.4 L550.9 248.0 L551.7 253.1 L552.5 258.5 L553.3 264.4 L554.1 270.6 L554.9 277.1 L555.6 283.9 L556.4 291.0 L557.2 298.4 L558.0 306.0 L558.8 313.9 L559.6 321.9 L560.4 330.2 L561.2 338.5 L562.0 347.1 L562.7 355.7 L563.5 364.4 L564.3 373.2 L565.1 382.0 L565.9 390.8 L566.7 399.7 L567.5 408.5 L568.3 417.3 L569.1 426.0 L569.8 434.6 L570.6 443.1 L571.4 451.5 L572.2 459.7 L573.0 467.8 L573.8 475.6 L574.6 483.2 L575.4 490.6 L576.2 497.7 L576.9 504.6 L577.7 511.1 L578.5 517.3 L579.3 523.1 L580.1 528.6 L580.9 533.6 L581.7 538.3 L582.5 542.5 L583.3 546.3 L584.1 549.7 L584.8 552.7 L585.6 555.3 L586.4 557.7 L587.2 559.7 L588.0 561.4 L588.8 562.9 L589.6 564.1 L590.4 565.1 L591.2 565.9 L591.9 566.5 L592.7 567.0 L593.5 567.5 L594.3 567.5 L595.1 568.5 L595.9 568.5 L596.7 568.5 L597.5 568.5 L598.3 568.5 L599.0 568.5 L599.8 568.5 L600.6 568.5 L601.4 568.5 L602.2 568.5 L603.0 568.5 L603.8 568.5 L604.6 568.5 L605.4 568.5 L606.1 568.5 L606.9 568.5 L607.7 568.5 L608.5 568.5 L609.3 568.5 L610.1 568.5 L610.9 568.5 L611.7 568.5 L612.5 568.5 L613.2 568.5 L614.0 568.5 L614.8 568.5 L615.6 568.5 L616.4 568.5 L617.2 568.5 L618.0 568.5 L618.8 568.5 L619.6 568.5 L620.4 568.5 L621.1 568.5 L621.9 568.5 L622.7 568.5 L623.5 568.5 L624.3 568.5 L625.1 568.5 L625.9 568.5 L626.7 568.5 L627.5 568.5 L628.2 568.5 L629.0 567.5 L629.8 567.5 L630.6 567.5 L631.4 567.5 L632.2 567.5 L633.0 567.5 L633.8 567.5 L634.6 567.5 L635.3 567.5 L636.1 567.5 L636.9 567.5 L637.7 567.5 L638.5 567.5 L639.3 567.5 L640.1 567.5 L640.9 567.5 L641.7 567.5 L642.4 567.5 L643.2 567.5 L644.0 567.5 L644.8 567.5 L645.6 567.5 L646.4 567.5 L647.2 567.5 L648.0 567.5 L648.8 567.5 L649.6 567.5 L650.3 567.5 L651.1 567.5 L651.9 567.5 L652.7 567.5 L653.5 567.5 L654.3 567.5 L655.1 567.5 L655.9 567.5 L656.7 567.5 L657.4 567.5 L658.2 567.5 L659.0 567.5 L659.8 567.5 L660.6 567.5 L661.4 567.5 L662.2 567.5 L663.0 567.5 L663.8 567.5 L664.5 567.5 L665.3 567.5 L666.1 567.5 L666.9 567.5 L667.7 567.5 L668.5 567.5 L669.3 567.5 L670.1 567.5 L670.9 567.5 L671.6 567.5 L672.4 567.5 L673.2 567.5 L674.0 567.5 L674.8 567.5 L675.6 567.5 L676.4 567.5 L677.2 567.5 L678.0 567.5 L678.8 567.5 L679.5 567.5 L680.3 567.5 L681.1 567.5 L681.9 567.5 L682.7 567.5 L683.5 567.5 L684.3 567.5 L685.1 567.5 L685.9 567.5 L686.6 567.5 L687.4 567.5 L688.2 567.5 L689.0 567.5 L689.8 567.5 L690.6 567.5 L691.4 567.5 L692.2 567.5 L693.0 567.5 L693.7 567.5 L694.5 567.5 L695.3 567.5 L696.1 567.5 L696.9 567.5 L697.7 567.5 L698.5 567.5 L699.3 567.5 L700.1 567.5 L700.8 567.5 L701.6 567.5 L702.4 567.5 L703.2 567.5 L704.0 567.5 L704.8 567.5 L705.6 567.5 L706.4 567.5 L707.2 567.5 L708.0 567.5 L708.7 567.5 L709.5 567.5 L710.3 567.5 L711.1 567.5 L711.9 567.5 L712.7 567.5 L713.5 567.5 L714.3 567.5 L715.1 567.5 L715.8 567.5 L716.6 567.5 L717.4 567.5 L718.2 567.5 L719.0 567.5 L719.8 567.5 L720.6 567.5 L721.4 567.5 L722.2 567.5 L722.9 567.5 L723.7 567.5 L724.5 567.5 L725.3 567.5 L726.1 567.5 L726.9 567.5 L727.7 567.5 L728.5 567.5 L729.3 567.5 L730.0 567.5 L730.8 567.5 L731.6 567.5 L732.4 567.5 L733.2 567.5 L734.0 567.5 L734.8 567.5 L735.6 567.5 L736.4 567.5 L737.1 567.5 L737.9 567.5 L738.7 567.5 L739.5 567.5 L740.3 567.5 L741.1 567.5 L741.9 567.5 L742.7 567.5 L743.5 567.5 L744.3 567.5 L745.0 567.5 L745.8 567.5 L746.6 567.5 L747.4 567.5 L748.2 567.5 L749.0 567.5 L749.8 567.5 L750.6 567.5 L751.4 567.5 L752.1 567.5 L752.9 567.5 L753.7 567.5 L754.5 567.5 L755.3 567.5 L756.1 567.5 L756.9 567.5 L757.7 567.5 L758.5 567.5 L759.2 567.5 L760.0 567.5 L760.8 567.5 L761.6 567.5 L762.4 567.5 L763.2 567.5 L764.0 567.5 L764.8 567.5 L765.6 567.5 L766.3 567.5 L767.1 567.5 L767.9 567.5 L768.7 567.5 L769.5 567.5 L770.3 567.5 L771.1 567.5 L771.9 567.5 L772.7 567.5 L773.5 567.5 L774.2 567.5 L775.0 567.5 L775.8 567.5 L776.6 567.5 L777.4 567.5 L778.2 567.5 L779.0 567.5 L779.8 567.5 L780.6 567.5 L781.3 567.5 L782.1 567.5 L782.9 567.5 L783.7 567.5 L784.5 567.5 L785.3 567.5 L786.1 567.5 L786.9 567.5 L787.7 567.5 L788.4 567.5 L789.2 567.5 L790.0 567.5 L790.8 567.5 L791.6 567.5 L792.4 567.5 L793.2 567.5 L794.0 567.5 L794.8 567.5 L795.5 567.5 L796.3 567.5 L797.1 567.5 L797.9 567.5 L798.7 567.5 L799.5 567.5 L800.3 567.5 L801.1 567.5 L801.9 567.5 L802.7 567.5 L803.4 567.5 L804.2 567.5 L805.0 567.5 L805.8 567.5 L806.6 567.5 L807.4 567.5 L808.2 567.5 L809.0 567.5 L809.8 567.5 L810.5 567.5 L811.3 567.5 L812.1 567.5 L812.9 567.5 L813.7 567.5 L814.5 567.5 L815.3 567.5 L816.1 567.5 L816.9 567.5 L817.6 567.5 L818.4 567.5 L819.2 567.5 L820.0 567.5 L820.8 567.5 L821.6 567.5 L822.4 567.5 L823.2 567.5 L824.0 567.5 L824.7 567.5 L825.5 567.5 L826.3 567.5 L827.1 567.5 L827.9 567.5 L828.7 567.5 L829.5 567.5 L830.3 567.5 L831.1 567.5 L831.8 567.5 L832.6 567.5 L833.4 567.5 L834.2 567.5 L835.0 567.5 L835.8 567.5 L836.6 567.5 L837.4 567.5 L838.2 567.5 L839.0 567.5 L839.7 567.5 L840.5 567.5 L841.3 567.5 L842.1 567.5 L842.9 567.5 L843.7 567.5 L844.5 567.5 L845.3 567.5 L846.1 567.5 L846.8 567.5 L847.6 567.5 L848.4 567.5 L849.2 567.5 L850.0 567.5" fill="none" stroke="#c01028" stroke-width="1.2" shape-rendering="auto"/>
<path d="M484 214.5H521M595 567.5H629" stroke="#1818a8" stroke-width="1" fill="none"/>
</svg>
<div class="t" style="left:2.00px;top:724.69px;font-size:11px;color:#000;transform:scaleX(0.9435);transform-origin:0 0;">Ready</div>
<div class="sunk" style="left:548px;top:722px;width:192px;height:16px"></div>
<div class="sunk" style="left:742px;top:722px;width:26px;height:16px"></div>
<div class="sunk" style="left:770px;top:722px;width:27px;height:16px"></div>
<div class="sunk" style="left:800px;top:722px;width:31px;height:16px"></div>
<div class="sunk" style="left:833px;top:722px;width:120px;height:16px"></div>
<div class="sunk" style="left:955px;top:722px;width:67px;height:16px"></div>
<div class="t" style="left:550.00px;top:724.69px;font-size:11px;color:#000;transform:scaleX(0.9708);transform-origin:0 0;">System Started</div>
<div class="t" style="left:835.00px;top:724.69px;font-size:11px;color:#000;transform:scaleX(0.9725);transform-origin:0 0;">martes, marzo 22 2016</div>
<div class="t" style="left:957.00px;top:724.69px;font-size:11px;color:#000;transform:scaleX(0.9379);transform-origin:0 0;">05:18 05 PM</div>
<div class="a" style="left:0px;top:738px;width:1024px;height:30px;background:#d4d0c8;"></div>
<div class="a" style="left:0px;top:739px;width:1024px;height:1px;background:#ffffff;"></div>
<div class="btn" style="left:2px;top:742px;width:54px;height:22px"></div>
<div class="t" style="left:21.30px;top:747.69px;font-size:11px;font-weight:bold;color:#000;transform:scaleX(1.0618);transform-origin:0 0;-webkit-text-stroke:0.25px currentColor;">Inicio</div>
<div class="a" style="left:61px;top:742px;width:160px;height:22px;border:1px solid;border-color:#404040 #fff #fff #404040;box-shadow:inset 1px 1px 0 #808080;background:#eae8e3"></div>
<div class="t" style="left:86.00px;top:748.69px;font-size:11px;font-weight:bold;color:#000;transform:scaleX(1.0579);transform-origin:0 0;-webkit-text-stroke:0.25px currentColor;">KMotion - Connected</div>
<svg class="a" style="left:64px;top:745px" width="19" height="17" viewBox="0 0 19 17" shape-rendering="crispEdges"><path d="M6 1h1v1h-1zM5 2h3v1h-3zM6 3h1v1h-1zM9 4h6v1h-6zM3 5h3v1h-3zM9 5h1v1h-1zM14 5h1v1h-1zM2 6h1v1h-1zM6 6h1v1h-1zM8 6h1v1h-1zM10 6h2v1h-2zM13 6h1v1h-1zM17 6h1v1h-1zM2 7h1v1h-1zM6 7h3v1h-3zM11 7h2v1h-2zM13 7h5v1h-5zM2 8h1v1h-1zM6 8h1v1h-1zM8 8h2v1h-2zM12 8h2v1h-2zM15 8h1v1h-1zM17 8h1v1h-1zM3 9h3v1h-3zM9 9h3v1h-3zM12 9h1v1h-1zM15 9h1v1h-1zM4 10h1v1h-1zM7 10h1v1h-1zM12 10h1v1h-1zM15 10h1v1h-1zM3 11h1v1h-1zM7 11h5v1h-5zM14 11h2v1h-2zM3 12h1v1h-1zM14 12h1v1h-1zM2 13h2v1h-2zM5 13h3v1h-3zM14 13h1v1h-1zM2 14h1v1h-1zM13 14h1v1h-1zM2 15h12v1h-12z" fill="#000"/></svg>
<div class="btn" style="left:224px;top:742px;width:160px;height:22px"></div>
<div class="t" style="left:247.50px;top:747.69px;font-size:11px;color:#000;transform:scaleX(0.9978);transform-origin:0 0;">Acrobat Reader - [KFlop...</div>
<div class="btn" style="left:387px;top:742px;width:160px;height:22px"></div>
<div class="t" style="left:410.50px;top:747.69px;font-size:11px;color:#000;transform:scaleX(0.9395);transform-origin:0 0;">X con cl - Paint</div>
<div class="btn" style="left:550px;top:742px;width:160px;height:22px"></div>
<div class="t" style="left:573.00px;top:747.69px;font-size:11px;color:#000;transform:scaleX(1.0046);transform-origin:0 0;">Pruebas conf step respo...</div>
<div class="a" style="left:863px;top:746px;width:17px;height:16px;background:#0a246a;"></div>
<div class="t" style="left:865.50px;top:748.69px;font-size:11px;color:#fff;transform:scaleX(0.7700);transform-origin:0 0;">ES</div>
<div class="a" style="left:883px;top:742px;width:1px;height:23px;background:#808080;"></div>
<div class="a" style="left:884px;top:742px;width:1px;height:23px;background:#ffffff;"></div>
<div class="sunk" style="left:888px;top:742px;width:134px;height:23px"></div>
<div class="t" style="left:985.60px;top:747.69px;font-size:11px;color:#000;transform:scaleX(0.9808);transform-origin:0 0;">17:18</div>
<svg class="a" style="left:0;top:738px" width="1024" height="30" viewBox="0 738 1024 30">
<!-- windows flag -->
<g transform="rotate(-7 12 752)">
<path d="M5 746q3-2 6.500-.5v6q-3.500-1.500-6.500.5z" fill="#e8562a"/>
<path d="M12.500 746q3 1.500 6.500-.5v6q-3.500 2-6.500.5z" fill="#6cb33f"/>
<path d="M5 753q3-2 6.500-.5v6q-3.500-1.500-6.500.5z" fill="#2e6fd8"/>
<path d="M12.500 753q3 1.500 6.500-.5v6q-3.500 2-6.500.5z" fill="#f2c230"/>
</g>
<!-- acrobat -->
<rect x="228.500" y="745.500" width="15" height="15" fill="#fff" stroke="#c81820" stroke-width="1.400"/>
<path d="M230 758q5-3 6.500-10.500q1.500 6 6 8q-6-1-12.500 2.500z" fill="none" stroke="#c81820" stroke-width="1.300"/>
<!-- paint -->
<path d="M393 748l3 9h6l3-9z" fill="#a89070"/>
<path d="M395 745l2 8M399 744v9M403 745l-2 8" stroke="#c03020" stroke-width="1.600" fill="none"/>
<path d="M397 746l1.500 7" stroke="#30a040" stroke-width="1.400"/>
<rect x="395" y="756" width="8" height="4" fill="#806850"/>
<!-- folder -->
<path d="M553.500 749.500v-2.500l1.500-1.500h5l1.500 2h8l1 1v10.500l-1 1h-15l-1-1z" fill="#f8e080" stroke="#a08020" stroke-width="1"/>
<path d="M554 750.500h16" stroke="#fff8c0" stroke-width="1"/>
<!-- tray icons -->
<g>
<rect x="892" y="748" width="9" height="8" fill="#283878"/><rect x="893" y="753" width="7" height="3" fill="#90a8e0"/><rect x="893" y="757.500" width="8" height="2" fill="#5060a0"/>
<path d="M902.500 747.500q2 2.500 0 5M904.500 746q3 4 0 8" stroke="#404858" stroke-width="1" fill="none"/>
<rect x="915" y="746" width="8" height="7" fill="#283878"/><rect x="911" y="750" width="8" height="7" fill="#3048a0"/><rect x="912" y="754" width="6" height="3" fill="#a0b0e0"/>
<path d="M918 753.500l7 7M925 753.500l-7 7" stroke="#e01010" stroke-width="2"/>
<circle cx="933" cy="751" r="5" fill="#909090" stroke="#505050"/><circle cx="932" cy="750" r="2" fill="#d0d0d0"/>
<circle cx="938.500" cy="756" r="4" fill="#fff" stroke="#e02818" stroke-width="1.800"/><path d="M936 754l5 4" stroke="#e02818" stroke-width="1.600"/>
<path d="M946 747q4 0 7-2q3 2 7 2q0 10-7 14q-7-4-7-14z" fill="#d82030" stroke="#701018" stroke-width="1"/>
<path d="M950.500 750.500l5 5M955.500 750.500l-5 5" stroke="#fff" stroke-width="1.800"/>
<path d="M963.500 746l2 13l3 1.500-1.500-14.500z" fill="#101060"/>
<path d="M966 746h10.500l2.500 14h-10.500z" fill="#1828d8"/>
<path d="M969 759.500l10 .5" stroke="#101060" stroke-width="1.200"/>
<circle cx="972" cy="752" r=".8" fill="#8090ff"/><circle cx="974" cy="755" r=".8" fill="#8090ff"/><circle cx="971" cy="756" r=".8" fill="#8090ff"/>
</g>
</svg>
</div>
</body></html>
